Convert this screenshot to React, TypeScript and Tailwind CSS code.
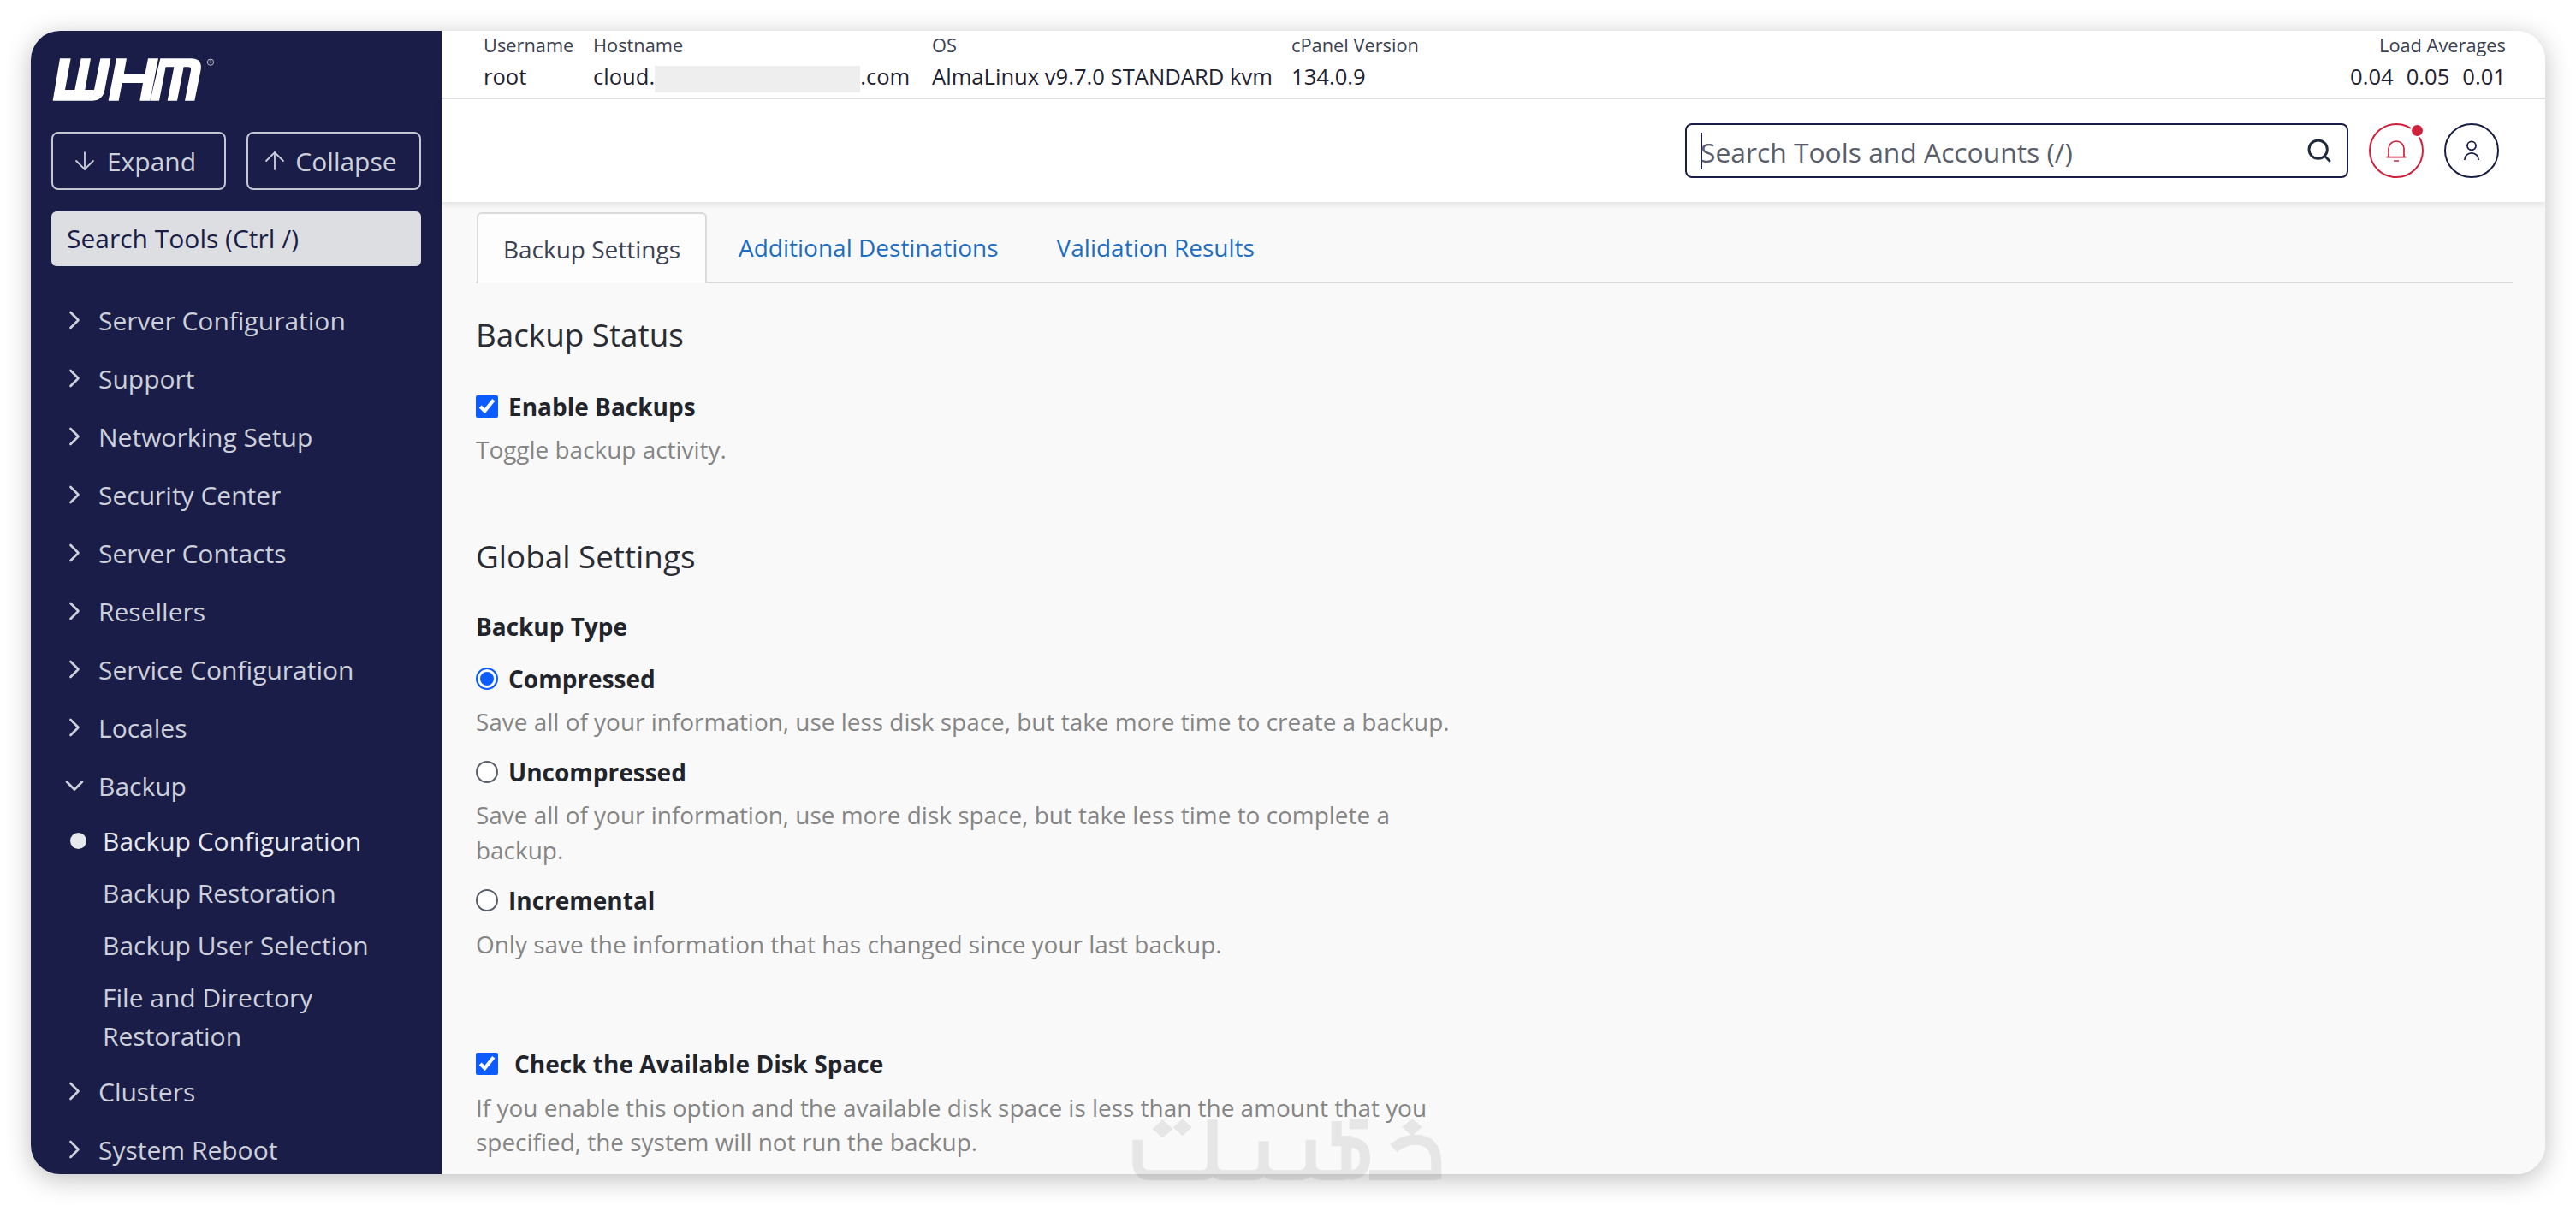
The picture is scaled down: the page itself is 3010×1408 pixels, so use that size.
import { ArrowDown, ArrowUp, ChevronDown, ChevronRight, Search } from "lucide-react";

const topItems = [
  "Server Configuration",
  "Support",
  "Networking Setup",
  "Security Center",
  "Server Contacts",
  "Resellers",
  "Service Configuration",
  "Locales",
];

function NavRow({ label, open }: { label: string; open?: boolean }) {
  return (
    <div className="flex h-[68px] items-center text-[30px] text-[#cdd0da]">
      <span className="w-[79px] shrink-0 pl-[33px]">
        {open ? (
          <ChevronDown className="h-[36px] w-[36px]" strokeWidth={1.8} />
        ) : (
          <ChevronRight className="h-[36px] w-[36px]" strokeWidth={1.8} />
        )}
      </span>
      {label}
    </div>
  );
}

function Sidebar() {
  return (
    <aside className="flex h-full w-[480px] shrink-0 flex-col overflow-hidden bg-[#1a1d47]">
      <div className="px-[24px] pt-[32px]">
        {/* WHM logo */}
        <svg viewBox="0 0 660 240" className="h-[80px] w-[220px] -ml-[10px] -mt-[13px] block">
          <g fill="#fff">
            <path d="M60 40H98L78 150H112L134 40H168L148 150H180L202 40H238L218 145Q212 188 175 188H35Z" />
            <path d="M258 40H294L284 96H358L369 40H405L376 188H340L351 126H278L266 188H230Z" />
            <path d="M412 40H520Q562 40 553 85L532 188H498L519 82Q521 70 510 70H494L471 188H437L460 70H431L408 188H376Z" />
          </g>
          <circle cx="588" cy="53" r="11" fill="none" stroke="#b8bbc8" strokeWidth="3" />
          <text x="588" y="58" textAnchor="middle" fontSize="14" fill="#b8bbc8" fontFamily="Open Sans, sans-serif">R</text>
        </svg>
        <div className="mt-[19px] flex gap-[24px]">
          <button className="flex h-[68px] w-[204px] items-center justify-center gap-[9px] rounded-[8px] border-2 border-[#c5c8d3] pr-[13px] text-[30px] text-[#cdd0da]">
            <ArrowDown className="h-[34px] w-[34px]" strokeWidth={1.3} />
            Expand
          </button>
          <button className="flex h-[68px] w-[204px] items-center justify-center gap-[7px] rounded-[8px] border-2 border-[#c5c8d3] pr-[12px] text-[30px] text-[#cdd0da]">
            <ArrowUp className="h-[34px] w-[34px]" strokeWidth={1.3} />
            Collapse
          </button>
        </div>
        <div className="mt-[25px] flex h-[64px] items-center rounded-[6px] bg-[#dcdee2] pb-[2px] pl-[18px] text-[30px] text-[#1a1d47]">
          Search Tools (Ctrl /)
        </div>
      </div>
      <div className="mt-[24px] h-[2px] bg-[#b5b7c4]" />
      <nav className="pt-[5px]">
        {topItems.map((item) => (
          <NavRow key={item} label={item} />
        ))}
        <NavRow label="Backup" open />
        <div className="flex h-[61px] items-center text-[30px] text-[#e6e8ed]">
          <span className="ml-[46px] mr-[19px] h-[19px] w-[19px] rounded-full bg-[#e6e8ed]" />
          Backup Configuration
        </div>
        <div className="flex h-[61px] items-center pl-[84px] text-[30px] text-[#cdd0da]">Backup Restoration</div>
        <div className="flex h-[61px] items-center pl-[84px] text-[30px] text-[#cdd0da]">Backup User Selection</div>
        <div className="py-[8px] pl-[84px] text-[30px] leading-[45px] text-[#cdd0da]">
          File and Directory
          <br />
          Restoration
        </div>
        <NavRow label="Clusters" />
        <NavRow label="System Reboot" />
      </nav>
    </aside>
  );
}

function InfoCell({ label, className, children }: { label: string; className: string; children: React.ReactNode }) {
  return (
    <div className={className}>
      <div className="h-[34px] text-[21.8px] leading-[34px] text-[#3c4152]">{label}</div>
      <div className="mt-[1px] h-[38px] text-[25.6px] leading-[38px] whitespace-nowrap text-[#1f2333]">{children}</div>
    </div>
  );
}

function TopBar() {
  return (
    <div className="flex h-[80px] shrink-0 border-b-2 border-[#e2e2e2] bg-white pl-[49px] pr-[46px]">
      <InfoCell label="Username" className="w-[128px]">root</InfoCell>
      <InfoCell label="Hostname" className="w-[396px]">
        cloud.
        <span className="inline-block h-[31px] w-[240px] bg-[#eeeeee] align-middle" />
        .com
      </InfoCell>
      <InfoCell label="OS" className="w-[420px]">AlmaLinux v9.7.0 STANDARD kvm</InfoCell>
      <InfoCell label="cPanel Version" className="w-[200px]">134.0.9</InfoCell>
      <div className="ml-auto text-right">
        <div className="h-[34px] text-[21.8px] leading-[34px] text-[#3c4152]">Load Averages</div>
        <div className="mt-[1px] flex h-[38px] justify-end gap-[15px] text-[25.6px] leading-[38px] text-[#1f2333]">
          <span>0.04</span>
          <span>0.05</span>
          <span>0.01</span>
        </div>
      </div>
    </div>
  );
}

function HeaderBar() {
  return (
    <div className="relative z-10 flex h-[120px] shrink-0 items-start justify-end gap-[24px] bg-white pr-[54px] pt-[28px] shadow-[0_3px_8px_rgba(0,0,0,0.1)]">
      <div className="flex h-[64px] w-[775px] items-center rounded-[8px] border-2 border-[#1a1d47] pl-[16px] pr-[16px]">
        <span className="h-[43px] w-[2px] bg-[#1a1d47]" />
        <span className="-ml-[2px] pt-[3px] text-[31.8px] text-[#5a5e6b]">Search Tools and Accounts (/)</span>
        <Search className="ml-auto h-[32px] w-[32px] text-[#1f2b3d]" strokeWidth={2.2} />
      </div>
      <div className="relative flex h-[64px] w-[64px] items-center justify-center rounded-full border-2 border-[#d0213c]">
        <svg viewBox="0 0 30 30" className="h-[30px] w-[30px]" fill="none" stroke="#d0213c" strokeWidth="1.7">
          <path d="M6 22.7V13A9 9 0 0 1 24 13V22.7" />
          <path d="M3.5 22.7H26.5" />
          <path d="M12 27H18" />
        </svg>
        <span className="absolute right-[-1px] top-[0px] h-[13px] w-[13px] rounded-full bg-[#d0213c] ring-2 ring-white" />
      </div>
      <div className="flex h-[64px] w-[64px] items-center justify-center rounded-full border-2 border-[#1a1d47]">
        <svg viewBox="0 0 30 30" className="h-[30px] w-[30px]" fill="none" stroke="#1a1d47" strokeWidth="1.8">
          <circle cx="15" cy="9.3" r="5" />
          <path d="M6.8 26A8.2 8.2 0 0 1 23.2 26" />
        </svg>
      </div>
    </div>
  );
}

function Tabs() {
  return (
    <div className="mt-[12px] flex h-[83px] border-b-2 border-[#d8d8d8]">
      <div className="-mb-[2px] ml-[1px] flex w-[269px] items-center justify-center rounded-t-[6px] border-2 border-b-0 border-[#dadada] bg-[#fdfdfd] text-[28px] text-[#3c4152]">
        Backup Settings
      </div>
      <div className="flex items-center pl-[37px] text-[28px] text-[#1b6ec2]">Additional Destinations</div>
      <div className="flex items-center pl-[68px] text-[28px] text-[#1b6ec2]">Validation Results</div>
    </div>
  );
}

function CheckOption({ label, className }: { label: string; className: string }) {
  return (
    <label className={`flex h-[40px] items-center ${className}`}>
      <input type="checkbox" defaultChecked className="h-[26px] w-[26px] shrink-0 accent-[#0d5cff]" />
      <span className="text-[28px] font-bold text-[#22242b]">{label}</span>
    </label>
  );
}

function RadioOption({ label, className, checked }: { label: string; className: string; checked?: boolean }) {
  return (
    <label className={`flex h-[40px] items-center gap-[12px] ${className}`}>
      <input
        type="radio"
        name="backup-type"
        defaultChecked={checked}
        className="h-[26px] w-[26px] shrink-0 appearance-none rounded-full border-2 border-[#5b5f6b] bg-white checked:border-[#0d5cff] checked:bg-[#0d5cff] checked:shadow-[inset_0_0_0_3px_#fff]"
      />
      <span className="text-[28px] font-bold text-[#22242b]">{label}</span>
    </label>
  );
}

function Settings() {
  return (
    <div className="w-[1160px] text-[27.95px] text-[#858585]">
      <h2 className="mt-[35px] h-[50px] text-[36.8px] leading-[50px] text-[#2a2c33]">Backup Status</h2>
      <CheckOption label="Enable Backups" className="mt-[39px] gap-[12px]" />
      <p className="mt-[10px] h-[40px] leading-[40px]">Toggle backup activity.</p>
      <h2 className="mt-[80px] h-[50px] text-[36.8px] leading-[50px] text-[#2a2c33]">Global Settings</h2>
      <div className="mt-[37px] h-[40px] font-bold leading-[40px] text-[#22242b]">Backup Type</div>
      <RadioOption label="Compressed" className="mt-[21px]" checked />
      <p className="mt-[10px] h-[40px] leading-[40px]">
        Save all of your information, use less disk space, but take more time to create a backup.
      </p>
      <RadioOption label="Uncompressed" className="mt-[19px]" />
      <p className="mt-[10px] leading-[41px]">
        Save all of your information, use more disk space, but take less time to complete a backup.
      </p>
      <RadioOption label="Incremental" className="mt-[18px]" />
      <p className="mt-[11px] h-[40px] leading-[40px]">Only save the information that has changed since your last backup.</p>
      <CheckOption label="Check the Available Disk Space" className="mt-[100px] gap-[19px]" />
      <p className="mt-[11px] leading-[40px]">
        If you enable this option and the available disk space is less than the amount that you specified, the system
        will not run the backup.
      </p>
    </div>
  );
}

// faint site logo that sits on top of everything
function Watermark() {
  return (
    <svg
      viewBox="0 0 1200 300"
      className="pointer-events-none absolute left-[1300px] top-[1290px] h-[100px] w-[400px] opacity-[0.07]"
      fill="none"
      stroke="#000"
      strokeWidth="36"
    >
      <path d="M88 125V205Q88 250 135 250H310Q350 250 350 210V55" />
      <path d="M350 210Q350 250 395 250H490Q530 250 530 210V130" />
      <path d="M530 210Q530 250 575 250H650Q695 250 695 210V125" />
      <path d="M695 210Q695 250 740 250H815" />
      <path d="M785 60V130H820V265" />
      <path d="M830 70H895" />
      <path d="M835 135Q885 135 885 190T835 250" />
      <path d="M985 155Q1020 125 1060 125Q1135 125 1135 205V265" />
      <path d="M900 250H1135" />
      <g fill="#000" stroke="none">
        <path d="M175 55L212 88L175 118L140 88Z" />
        <path d="M245 52L278 82L245 112L212 82Z" />
        <path d="M1050 52L1085 80L1050 112L1015 80Z" />
      </g>
    </svg>
  );
}

export default function App() {
  return (
    <div className="relative h-[1408px] w-[3010px] overflow-hidden bg-white pl-[36px] pt-[36px] font-['Open_Sans',sans-serif]">
      <div className="flex h-[1336px] w-[2938px] overflow-hidden rounded-[34px] shadow-[0_6px_30px_rgba(0,0,0,0.25)]">
        <Sidebar />
        <main className="flex min-w-0 flex-1 flex-col bg-[#f9f9f9]">
          <TopBar />
          <HeaderBar />
          <div className="flex-1 overflow-hidden pl-[40px] pr-[38px]">
            <Tabs />
            <Settings />
          </div>
        </main>
      </div>
      <Watermark />
    </div>
  );
}
